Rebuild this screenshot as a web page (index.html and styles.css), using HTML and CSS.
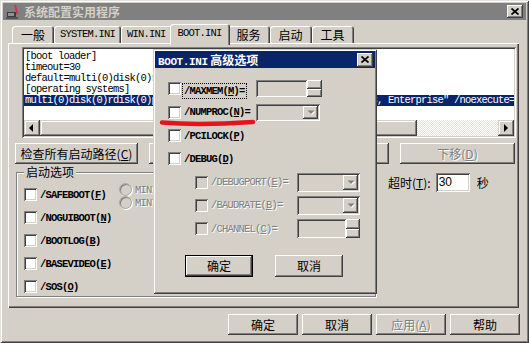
FILE: index.html
```html
<!DOCTYPE html>
<html lang="zh-CN">
<head>
  <meta charset="UTF-8" />
  <meta name="viewport" content="width=device-width, initial-scale=1.0" />
  <title>系统配置实用程序</title>
  <link rel="stylesheet" href="styles.css">
</head>
<body>
<div class="window">
  <div class="titlebar">
    <svg class="app-icon" viewBox="0 0 16 16">
      <rect x="2" y="8" width="9" height="5" fill="#3c3c3c"/>
      <rect x="3" y="9" width="6" height="3" fill="#8e9498"/>
      <rect x="1" y="13" width="12" height="2" fill="#555"/>
      <path d="M10 1 L12.5 10" stroke="#c8385a" stroke-width="2"/>
    </svg>
    <span class="title">系统配置实用程序</span>
    <span class="cap-btn">
      <svg width="8" height="7" viewBox="0 0 8 7"><path d="M0.5 0.5 L7.5 6.5 M7.5 0.5 L0.5 6.5" stroke="#000" stroke-width="1.7"/></svg>
    </span>
  </div>

  <div class="tabs">
    <div class="tab">一般</div>
    <div class="tab mono">SYSTEM.INI</div>
    <div class="tab mono">WIN.INI</div>
    <div class="tab mono active">BOOT.INI</div>
    <div class="tab">服务</div>
    <div class="tab">启动</div>
    <div class="tab">工具</div>
  </div>

  <div class="panel">
    <div class="listbox">
      <div class="lines mono">
        <div class="line">[boot loader]</div>
        <div class="line">timeout=30</div>
        <div class="line">default=multi(0)disk(0)rdisk(0)partition(1)\WINDOWS</div>
        <div class="line">[operating systems]</div>
        <div class="line sel">multi(0)disk(0)rdisk(0)partition(1)\WINDOWS="Windows Server 2003, Enterprise" /noexecute=optout /fastdetect</div>
      </div>
      <div class="hscroll">
        <span class="sb-btn"><svg width="16" height="16" viewBox="0 0 16 16"><polygon points="9,4 5,8 9,12" fill="#000"/></svg></span>
        <span class="sb-thumb"></span>
        <span class="sb-track"></span>
        <span class="sb-btn"><svg width="16" height="16" viewBox="0 0 16 16"><polygon points="6,4 10,8 6,12" fill="#000"/></svg></span>
      </div>
    </div>

    <div class="btn-row">
      <div class="btn w-check">检查所有启动路径(<u>C</u>)</div>
      <div class="btn w-default">设为默认(<u>S</u>)</div>
      <div class="btn w-up">上移(<u>U</u>)</div>
      <div class="btn w-down dis">下移(<u>D</u>)</div>
    </div>

    <div class="lower">
      <div class="groupbox">
        <div class="group-label">启动选项</div>
        <div class="group-body">
          <div class="opt-col">
            <div class="opt"><span class="check"></span><span class="mono lbl">/SAFEBOOT(<u>F</u>)</span></div>
            <div class="opt"><span class="check"></span><span class="mono lbl">/NOGUIBOOT(<u>N</u>)</span></div>
            <div class="opt"><span class="check"></span><span class="mono lbl">/BOOTLOG(<u>B</u>)</span></div>
            <div class="opt"><span class="check"></span><span class="mono lbl">/BASEVIDEO(<u>E</u>)</span></div>
            <div class="opt"><span class="check"></span><span class="mono lbl">/SOS(<u>O</u>)</span></div>
          </div>
          <div class="radio-col">
            <div class="radio-row"><span class="radio"></span><span class="mono dis">MINIMAL</span></div>
            <div class="radio-row"><span class="radio"></span><span class="mono dis">MINIMAL(ALTERNATESHELL)</span></div>
          </div>
        </div>
      </div>
      <div class="timeout">
        <span>超时(<u>T</u>):</span>
        <span class="edit">30</span>
        <span class="unit">秒</span>
      </div>
    </div>
  </div>

  <div class="footer">
    <div class="btn w-foot">确定</div>
    <div class="btn w-foot">取消</div>
    <div class="btn w-foot dis">应用(<u>A</u>)</div>
    <div class="btn w-foot">帮助</div>
  </div>

  <div class="dialog">
    <div class="dlg-title">
      <span><span class="mono-b">BOOT.INI</span> 高级选项</span>
      <span class="cap-btn">
        <svg width="8" height="7" viewBox="0 0 8 7"><path d="M0.5 0.5 L7.5 6.5 M7.5 0.5 L0.5 6.5" stroke="#000" stroke-width="1.7"/></svg>
      </span>
    </div>
    <div class="dlg-body">
      <div class="dlg-row">
        <span class="check"></span>
        <span class="lbl-main"><span class="mono lbl focus">/MAXMEM(<u>M</u>)=</span></span>
        <span class="spin-edit">
          <span class="field-off w-maxmem"></span>
          <span class="spin"><span class="spin-btn"></span><span class="spin-btn"></span></span>
        </span>
      </div>
      <div class="dlg-row">
        <span class="check"></span>
        <span class="lbl-main mono lbl">/NUMPROC(<u>N</u>)=</span>
        <span class="combo w-numproc"><span class="drop"><svg width="8" height="5" viewBox="0 0 8 5"><polygon points="0.5,0.5 7.5,0.5 4,4" fill="#808080"/></svg></span></span>
      </div>
      <div class="dlg-row">
        <span class="check"></span>
        <span class="mono lbl">/PCILOCK(<u>P</u>)</span>
      </div>
      <div class="dlg-row">
        <span class="check"></span>
        <span class="mono lbl">/DEBUG(<u>D</u>)</span>
      </div>
      <div class="dlg-row sub">
        <span class="check off"></span>
        <span class="lbl-sub mono dis">/DEBUGPORT(<u>E</u>)=</span>
        <span class="combo w-sub"><span class="drop"><svg width="8" height="5" viewBox="0 0 8 5"><polygon points="0.5,0.5 7.5,0.5 4,4" fill="#808080"/></svg></span></span>
      </div>
      <div class="dlg-row sub">
        <span class="check off"></span>
        <span class="lbl-sub mono dis">/BAUDRATE(<u>B</u>)=</span>
        <span class="combo w-sub"><span class="drop"><svg width="8" height="5" viewBox="0 0 8 5"><polygon points="0.5,0.5 7.5,0.5 4,4" fill="#808080"/></svg></span></span>
      </div>
      <div class="dlg-row sub">
        <span class="check off"></span>
        <span class="lbl-sub mono dis">/CHANNEL(<u>C</u>)=</span>
        <span class="spin-edit">
          <span class="field-off w-channel"></span>
          <span class="spin small"><span class="spin-btn"></span><span class="spin-btn"></span></span>
        </span>
      </div>
      <div class="dlg-buttons">
        <div class="btn w-dlg default">确定</div>
        <div class="btn w-dlg">取消</div>
      </div>
    </div>
  </div>

  <svg class="annotation" width="100" height="12" viewBox="0 0 100 12">
    <path d="M4 5.5 Q40 8.5 95 5" stroke="#e4141c" stroke-width="4.5" stroke-linecap="round" fill="none"/>
  </svg>
</div>
</body>
</html>
```

FILE: styles.css
```css
body {
  margin: 0;
  background: #d4d0c8;
  font-family: "Noto Sans CJK SC", sans-serif;
  font-size: 12px;
  color: #000;
}
u {
  text-decoration: underline;
  text-underline-offset: 1px;
}
.mono {
  font-family: "Liberation Mono", "Noto Sans CJK SC", monospace;
  font-size: 10.5px;
  letter-spacing: -0.8px;
}
.lbl {
  font-weight: bold;
}
.mono-b {
  font-family: "Liberation Mono", monospace;
  font-size: 11px;
  letter-spacing: -0.4px;
}
.dis {
  color: #808080;
  text-shadow: 1px 1px 0 #fff;
}

.window {
  position: relative;
  width: 529px;
  height: 343px;
  box-sizing: border-box;
  padding: 3px;
  background: #d4d0c8;
  box-shadow: inset 1px 1px #e4e2dc, inset -1px -1px #404040, inset 2px 2px #fff, inset -2px -2px #808080;
  overflow: hidden;
}

/* title bar */
.titlebar {
  display: flex;
  align-items: center;
  height: 17px;
  padding: 0 3px 0 2px;
  background: #808080;
}
.app-icon {
  width: 16px;
  height: 16px;
  flex: none;
}
.title {
  flex: 1;
  margin-left: 3px;
  color: #d4d0c8;
  font-weight: bold;
  line-height: 17px;
}
.cap-btn {
  display: flex;
  align-items: center;
  justify-content: center;
  width: 16px;
  height: 13px;
  background: #d4d0c8;
  box-shadow: inset -1px -1px #404040, inset 1px 1px #fff, inset -2px -2px #808080;
}

/* tabs */
.tabs {
  display: flex;
  align-items: flex-end;
  height: 19px;
  margin-top: 4px;
  padding-left: 9px;
}
.tab {
  height: 17px;
  box-sizing: border-box;
  padding: 0 9px;
  line-height: 17px;
  border-radius: 3px 3px 0 0;
  background: #d4d0c8;
  box-shadow: inset 1px 1px #fff, inset -1px 0 #404040, inset -2px 0 #808080;
}
.tab.mono {
  padding: 0 6px;
}
.tab.active {
  position: relative;
  z-index: 1;
  height: 21px;
  margin: 0 -2px -2px;
  padding: 0 8px 2px;
  line-height: 19px;
}

/* tab page */
.panel {
  display: flex;
  flex-direction: column;
  height: 265px;
  box-sizing: border-box;
  margin: 0 7px 0 5px;
  padding: 2px;
  box-shadow: inset 1px 1px #fff, inset -1px -1px #404040, inset -2px -2px #808080;
}
.listbox {
  display: flex;
  flex-direction: column;
  height: 91px;
  box-sizing: border-box;
  margin: 2px 1px 0 12px;
  padding: 2px;
  background: #fff;
  box-shadow: inset 1px 1px #808080, inset -1px -1px #fff, inset 2px 2px #404040, inset -2px -2px #d4d0c8;
  overflow: hidden;
}
.lines {
  flex: 1;
  padding-top: 2px;
  overflow: hidden;
}
.line {
  height: 11px;
  line-height: 11px;
  padding-left: 1px;
  white-space: pre;
}
.line.sel {
  background: #0a246a;
  color: #fff;
}
.hscroll {
  display: flex;
  height: 16px;
  flex: none;
}
.sb-btn {
  width: 16px;
  height: 16px;
  flex: none;
  background: #d4d0c8;
  box-shadow: inset -1px -1px #404040, inset 1px 1px #d4d0c8, inset -2px -2px #808080, inset 2px 2px #fff;
}
.sb-btn svg {
  display: block;
}
.sb-thumb {
  width: 377px;
  flex: none;
  background: #d4d0c8;
  box-shadow: inset -1px -1px #404040, inset 1px 1px #d4d0c8, inset -2px -2px #808080, inset 2px 2px #fff;
}
.sb-track {
  flex: 1;
  background: repeating-conic-gradient(#fff 0 25%, #e4e1da 0 50%) 0 0 / 2px 2px;
}

/* buttons */
.btn {
  display: flex;
  align-items: center;
  justify-content: center;
  height: 21px;
  box-sizing: border-box;
  background: #d4d0c8;
  box-shadow: inset -1px -1px #404040, inset 1px 1px #fff, inset -2px -2px #808080;
  white-space: nowrap;
}
.btn-row {
  display: flex;
  justify-content: space-between;
  margin: 5px 2px 0 5px;
}
.w-check { width: 123px; }
.w-default { width: 117px; }
.w-up { width: 112px; }
.w-down { width: 115px; }

/* lower area */
.lower {
  display: flex;
  margin-top: 8px;
  padding-left: 6px;
}
.groupbox {
  width: 360px;
  height: 125px;
  box-sizing: border-box;
  border: 1px solid #808080;
  box-shadow: inset 1px 1px #fff, 1px 1px #fff;
}
.group-label {
  width: fit-content;
  margin: -9px 0 0 7px;
  padding: 0 2px;
  line-height: 16px;
  background: #d4d0c8;
}
.group-body {
  display: flex;
  padding: 3px 0 0 7px;
}
.opt-col {
  width: 95px;
  flex: none;
}
.opt {
  display: flex;
  align-items: center;
  gap: 3px;
  height: 23px;
  white-space: nowrap;
}
.check {
  width: 13px;
  height: 13px;
  flex: none;
  background: #fff;
  box-shadow: inset 1px 1px #808080, inset -1px -1px #fff, inset 2px 2px #404040, inset -2px -2px #d4d0c8;
}
.check.off {
  background: #d4d0c8;
}
.radio-col {
  white-space: nowrap;
}
.radio-row {
  display: flex;
  align-items: center;
  gap: 3px;
  height: 13px;
}
.radio {
  width: 11px;
  height: 11px;
  border-radius: 50%;
  background: #d4d0c8;
  border: 1px solid #a8a49c;
  box-shadow: inset 1px 1px #808080, 1px 1px #fff;
}
.timeout {
  display: flex;
  align-items: center;
  height: 19px;
  margin: 1px 0 0 12px;
  white-space: nowrap;
}
.edit {
  width: 34px;
  height: 19px;
  box-sizing: border-box;
  margin-left: 5px;
  padding: 1px 0 0 3px;
  background: #fff;
  font-family: "Liberation Sans", sans-serif;
  line-height: 17px;
  box-shadow: inset 1px 1px #808080, inset -1px -1px #fff, inset 2px 2px #404040, inset -2px -2px #d4d0c8;
}
.unit {
  margin-left: 7px;
}

/* bottom buttons */
.footer {
  display: flex;
  justify-content: flex-end;
  gap: 4px;
  margin: 6px 6px 0 0;
}
.w-foot { width: 70px; }

/* BOOT.INI dialog */
.dialog {
  position: absolute;
  left: 153px;
  top: 49px;
  width: 224px;
  height: 245px;
  box-sizing: border-box;
  padding: 2px;
  background: #d4d0c8;
  box-shadow: inset 1px 1px #d4d0c8, inset -1px -1px #404040, inset 2px 2px #fff, inset -2px -2px #808080;
}
.dlg-title {
  display: flex;
  align-items: center;
  justify-content: space-between;
  height: 17px;
  padding: 0 2px 0 3px;
  background: #0a246a;
  color: #fff;
  font-weight: bold;
}
.dlg-title .cap-btn {
  height: 14px;
}
.dlg-body {
  padding: 9.3px 0 0 13px;
}
.dlg-row {
  display: flex;
  align-items: center;
  height: 23.3px;
  white-space: nowrap;
}
.dlg-row .check {
  margin-right: 3px;
}
.dlg-row.sub {
  padding-left: 27px;
}
.lbl-main {
  width: 72px;
  flex: none;
}
.lbl-sub {
  width: 86px;
  flex: none;
}
.focus {
  outline: 1px dotted #000;
  outline-offset: 1px;
}
.spin-edit {
  display: flex;
}
.field-off {
  height: 17px;
  background: #d4d0c8;
  box-shadow: inset 1px 1px #808080, inset -1px -1px #fff, inset 2px 2px #404040, inset -2px -2px #d4d0c8;
}
.w-maxmem { width: 51px; }
.w-channel { width: 49px; height: 19px; }
.spin {
  display: flex;
  flex-direction: column;
  width: 15px;
  height: 17px;
}
.spin.small {
  width: 14px;
  height: 19px;
}
.spin-btn {
  flex: 1;
  background: #d4d0c8;
  box-shadow: inset -1px -1px #404040, inset 1px 1px #fff, inset -2px -2px #808080;
}
.combo {
  display: flex;
  justify-content: flex-end;
  height: 17px;
  box-sizing: border-box;
  padding: 2px;
  background: #d4d0c8;
  box-shadow: inset 1px 1px #808080, inset -1px -1px #fff, inset 2px 2px #404040, inset -2px -2px #d4d0c8;
}
.w-numproc { width: 64px; }
.w-sub { width: 63px; height: 19px; }
.drop {
  display: flex;
  align-items: center;
  justify-content: center;
  width: 15px;
  background: #d4d0c8;
  box-shadow: inset -1px -1px #404040, inset 1px 1px #fff, inset -2px -2px #808080;
}
.drop svg {
  filter: drop-shadow(1px 1px 0 #fff);
}
.dlg-buttons {
  display: flex;
  gap: 22px;
  margin-top: 14.5px;
  padding-left: 17px;
}
.w-dlg {
  width: 68px;
  height: 22px;
}
.btn.default {
  box-shadow: inset 0 0 0 1px #000, inset -2px -2px #404040, inset 2px 2px #fff, inset -3px -3px #808080;
}

/* hand-drawn red mark under /NUMPROC */
.annotation {
  position: absolute;
  left: 158px;
  top: 117px;
}
```
